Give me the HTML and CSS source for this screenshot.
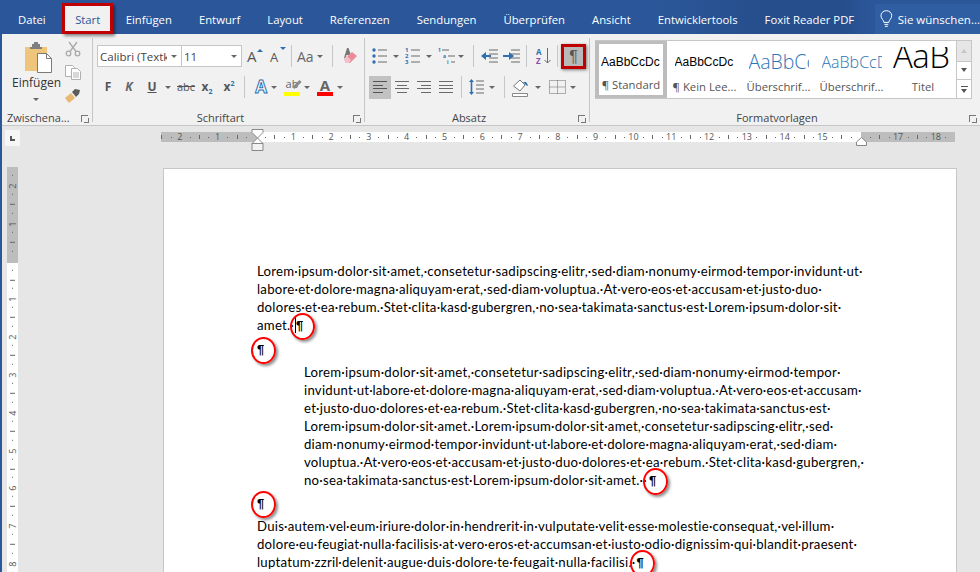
FILE: index.html
```html
<!DOCTYPE html>
<html lang="de">
<head>
<meta charset="utf-8">
<title>Word</title>
<link rel="stylesheet" href="styles.css">
</head>
<body>
<nav class="tabs">
  <span class="tab first">Datei</span>
  <span class="tab active">Start</span>
  <span class="tab">Einfügen</span>
  <span class="tab">Entwurf</span>
  <span class="tab">Layout</span>
  <span class="tab">Referenzen</span>
  <span class="tab">Sendungen</span>
  <span class="tab">Überprüfen</span>
  <span class="tab">Ansicht</span>
  <span class="tab">Entwicklertools</span>
  <span class="tab">Foxit Reader PDF</span>
  <span class="tell">
    <svg width="13" height="18" viewBox="0 0 13 18" fill="none" stroke="#fff"><path d="M4 12.500C4 10 1 9 1 5.500a5.500 5 0 0 1 11 0C12 9 9 10 9 12.500z"/><path d="M4.500 14.500h4M5 16.500h3"/></svg>
    Sie wünschen...
  </span>
</nav>

<section class="ribbon">
  <div class="group g1">
    <div class="gbody clip">
      <div class="paste">
        <svg width="30" height="32" viewBox="0 0 30 32"><path d="M1 5h22v24H1z" fill="#efc57c"/><path d="M8 5V2h2V0h4v2h2v3h2v2H6V5z" fill="#7f7f7f"/><path d="M13.500 11.500h9l5 5v14h-14z" fill="#fff" stroke="#7a7a7a"/><path d="M22.500 11.500v5h5" fill="none" stroke="#7a7a7a"/></svg>
        <span class="paste-t">Einfügen</span>
        <i class="arrow"></i>
      </div>
      <div class="smallcol">
        <svg width="16" height="16" viewBox="0 0 16 16" fill="none" stroke="#a9a9a9" stroke-width="1.300"><circle cx="3.500" cy="12.500" r="2.300"/><circle cx="12.500" cy="12.500" r="2.300"/><path d="M5 10.500 12 1M11 10.500 4 1"/></svg>
        <svg width="16" height="15" viewBox="0 0 16 15" fill="#fff" stroke="#b0b0b0"><path d="M.5.500h7l2 2v9h-9z"/><path d="M6.500 3.500h6l3 3v8h-9z"/><path d="M8 8h6M8 10h6M8 12h6" fill="none"/></svg>
        <svg width="16" height="15" viewBox="0 0 16 15"><path d="M0 10 6 5l4 5-6 5z" fill="#e9b872"/><path d="M7 4l3-3 5 1-1 4-3 3z" fill="#5c5c5c"/></svg>
      </div>
    </div>
    <div class="glabel"><span class="gtext left">Zwischena...</span><i class="launcher"></i></div>
  </div>

  <div class="group g2">
    <div class="gbody">
      <div class="row r1 pl4">
        <span class="combo wfont"><span class="combo-t">Calibri (Textk</span><i class="arrow"></i></span>
        <span class="combo wsize"><span class="combo-t num">11</span><i class="arrow"></i></span>
        <span class="fa ml5">A<i class="up"></i></span>
        <span class="fa small ml7">A<i class="down"></i></span>
        <i class="sep ml7"></i>
        <span class="aa ml5">Aa</span><i class="arrow ml2"></i>
        <i class="sep ml9"></i>
        <svg class="ml7" width="18" height="18" viewBox="0 0 18 18"><path d="M7 1h1.500L12 11H10.500l-1-3h-3l-1 3H4z" fill="#777"/><path d="M4 12 12 5l5 4-7 7H6z" fill="#ec8a9a"/><path d="M4 12l3-3 4 4-2 3H6z" fill="#f4c1c9"/></svg>
      </div>
      <div class="row r2">
        <span class="fb w12 ml9 b">F</span>
        <span class="fb w12 ml9 bi">K</span>
        <span class="fb w12 ml11 b u">U</span><i class="arrow ml7"></i>
        <span class="fb w17 ml6 st">abc</span>
        <span class="fb w14 ml6 b">x<sub>2</sub></span>
        <span class="fb w14 ml8 b">x<sup>2</sup></span>
        <i class="sep ml8"></i>
        <span class="fx ml8">A</span><i class="arrow ml2"></i>
        <span class="hl pen ml7">ab<i class="bar yellow"></i></span><i class="arrow ml4"></i>
        <span class="hl col ml7">A<i class="bar red"></i></span><i class="arrow ml4"></i>
      </div>
    </div>
    <div class="glabel"><span class="gtext">Schriftart</span><i class="launcher"></i></div>
  </div>

  <div class="group g3">
    <div class="gbody">
      <div class="row r1">
        <svg class="ml7" width="15" height="18" viewBox="0 0 15 18"><g fill="#2f6fb0"><circle cx="2" cy="3" r="1.700"/><circle cx="2" cy="9" r="1.700"/><circle cx="2" cy="15" r="1.700"/></g><path d="M6 3h9M6 9h9M6 15h9" stroke="#6a6a6a"/></svg>
        <i class="arrow ml6"></i>
        <svg class="ml6" width="15" height="18" viewBox="0 0 15 18"><g fill="#2f6fb0" font-size="6" font-family="Open Sans, sans-serif" font-weight="700"><text x="0" y="5">1</text><text x="0" y="11">2</text><text x="0" y="17">3</text></g><path d="M6 3h9M6 9h9M6 15h9" stroke="#6a6a6a"/></svg>
        <i class="arrow ml6"></i>
        <svg class="ml6" width="17" height="18" viewBox="0 0 17 18"><g fill="#2f6fb0" font-size="5" font-family="Open Sans, sans-serif" font-weight="700"><text x="0" y="5">1</text><text x="5" y="11">a</text><text x="9" y="17">i</text></g><path d="M4 3h7M10 9h7M13 15h4" stroke="#6a6a6a"/></svg>
        <i class="arrow ml3"></i>
        <i class="sep ml9"></i>
        <svg class="ml7" width="17" height="14" viewBox="0 0 17 14"><path d="M8 1h9M8 5h9M8 9h9M8 13h9" stroke="#6a6a6a"/><path d="M0 7l5-4v3h5v2H5v3z" fill="#2f6fb0"/></svg>
        <svg class="ml5" width="17" height="14" viewBox="0 0 17 14"><path d="M8 1h9M8 5h9M8 9h9M8 13h9" stroke="#6a6a6a"/><path d="M11 7 6 3v3H0v2h6v3z" fill="#2f6fb0"/></svg>
        <i class="sep ml6"></i>
        <svg class="ml9" width="15" height="18" viewBox="0 0 15 18"><text x="0" y="8" font-size="8" font-weight="700" font-family="Open Sans, sans-serif" fill="#2f6fb0">A</text><text x="0" y="17" font-size="8" font-weight="700" font-family="Open Sans, sans-serif" fill="#8e4ba8">Z</text><path d="M11.500 1v15M8.500 13l3 3 3-3" fill="none" stroke="#6a6a6a"/></svg>
        <i class="sep ml6"></i>
        <span class="pil ml3">¶</span>
      </div>
      <div class="row r2">
        <span class="alignbtn ml4"><svg width="14" height="12" viewBox="0 0 14 12"><path d="M0 .5h14M0 4.500h10M0 7.500h14M0 11.500h10" stroke="#555"/></svg></span>
        <svg class="ml4" width="14" height="12" viewBox="0 0 14 12"><path d="M0 .5h14M2 4.500h10M0 7.500h14M2 11.500h10" stroke="#6a6a6a"/></svg>
        <svg class="ml8" width="14" height="12" viewBox="0 0 14 12"><path d="M0 .5h14M4 4.500h10M0 7.500h14M4 11.500h10" stroke="#6a6a6a"/></svg>
        <svg class="ml8" width="14" height="12" viewBox="0 0 14 12"><path d="M0 .5h14M0 4.500h14M0 7.500h14M0 11.500h14" stroke="#6a6a6a"/></svg>
        <i class="sep ml8"></i>
        <svg class="ml7" width="15" height="18" viewBox="0 0 15 18"><path d="M7 3h8M7 7h8M7 11h8M7 15h8" stroke="#6a6a6a"/><path d="M2.500 1l2.500 3H3.300v10H5l-2.500 3L0 14h1.700V4H0z" fill="#2f6fb0"/></svg>
        <i class="arrow ml5"></i>
        <i class="sep ml9"></i>
        <svg class="ml7" width="17" height="19" viewBox="0 0 17 19"><path d="M1.500 8 8 2l5 5-5 6z" fill="#fff" stroke="#777"/><path d="M11 4h3l2 3-1 1z" fill="#2f6fb0"/><path d="M.5 15.500h15v3H.5z" fill="#fff" stroke="#888"/></svg>
        <i class="arrow ml6"></i>
        <svg class="ml8" width="17" height="14" viewBox="0 0 17 14" fill="none" stroke="#666" stroke-dasharray="1 1"><path d="M.5.500h16v13H.5zM8.500.500v13M.5 7h16"/></svg>
        <i class="arrow ml4"></i>
      </div>
    </div>
    <div class="glabel"><span class="gtext">Absatz</span><i class="launcher"></i></div>
  </div>

  <div class="group g4">
    <div class="gbody">
      <div class="gallery">
        <div class="items">
          <div class="style sel"><span class="smp s1">AaBbCcDc</span><span class="lbl">¶ Standard</span></div>
          <div class="style w74"><span class="smp s1">AaBbCcDc</span><span class="lbl">¶ Kein Lee...</span></div>
          <div class="style w73"><span class="smp s2">AaBbCc</span><span class="lbl">Überschrif...</span></div>
          <div class="style w73"><span class="smp s3">AaBbCcD</span><span class="lbl">Überschrif...</span></div>
          <div class="style w70"><span class="smp s4">AaB</span><span class="lbl">Titel</span></div>
        </div>
        <div class="scroll">
          <span class="sb top"><i class="tri upx"></i></span>
          <span class="sb"><i class="tri"></i></span>
          <span class="sb more"><i class="tri"></i></span>
        </div>
      </div>
    </div>
    <div class="glabel"><span class="gtext">Formatvorlagen</span><i class="launcher"></i></div>
  </div>
</section>

<div class="rulerrow">
  <span class="corner"><i></i></span>
  <div class="hruler">
    <span class="cm">2</span><span class="cm">1</span><span class="cm"></span>
    <span class="cm">1</span><span class="cm">2</span><span class="cm">3</span><span class="cm">4</span><span class="cm">5</span>
    <span class="cm">6</span><span class="cm">7</span><span class="cm">8</span><span class="cm">9</span><span class="cm">10</span>
    <span class="cm">11</span><span class="cm">12</span><span class="cm">13</span><span class="cm">14</span><span class="cm">15</span>
    <span class="cm"></span><span class="cm">17</span><span class="cm">18</span>
    <svg class="hourglass" width="13" height="22" viewBox="0 0 13 22"><path d="M1 .5h11v3L6.500 9 1 3.500zM6.500 9 12 14.500H1z" fill="#fff" stroke="#888"/><path d="M1 14.500h11v7H1z" fill="#f2f2f2" stroke="#888"/></svg>
    <svg class="rightmark" width="11" height="9" viewBox="0 0 11 9"><path d="M5.500.5 10.500 5v3.500H.5V5z" fill="#fff" stroke="#888"/></svg>
  </div>
</div>

<main class="work">
  <div class="vruler">
    <span class="vcm">2</span><span class="vcm">1</span><span class="vcm"></span>
    <span class="vcm">1</span><span class="vcm">2</span><span class="vcm">3</span><span class="vcm">4</span>
    <span class="vcm">5</span><span class="vcm">6</span><span class="vcm">7</span><span class="vcm">8</span>
  </div>
  <article class="page">
    <div class="para">
      <div>Lorem·ipsum·dolor·sit·amet,·consetetur·sadipscing·elitr,·sed·diam·nonumy·eirmod·tempor·invidunt·ut·</div>
      <div>labore·et·dolore·magna·aliquyam·erat,·sed·diam·voluptua.·At·vero·eos·et·accusam·et·justo·duo·</div>
      <div>dolores·et·ea·rebum.·Stet·clita·kasd·gubergren,·no·sea·takimata·sanctus·est·Lorem·ipsum·dolor·sit·</div>
      <div>amet.·<span class="mark m1">¶</span></div>
    </div>
    <div class="para gap1"><span class="mark m2">¶</span></div>
    <div class="para indent">
      <div>Lorem·ipsum·dolor·sit·amet,·consetetur·sadipscing·elitr,·sed·diam·nonumy·eirmod·tempor·</div>
      <div>invidunt·ut·labore·et·dolore·magna·aliquyam·erat,·sed·diam·voluptua.·At·vero·eos·et·accusam·</div>
      <div>et·justo·duo·dolores·et·ea·rebum.·Stet·clita·kasd·gubergren,·no·sea·takimata·sanctus·est·</div>
      <div>Lorem·ipsum·dolor·sit·amet.·Lorem·ipsum·dolor·sit·amet,·consetetur·sadipscing·elitr,·sed·</div>
      <div>diam·nonumy·eirmod·tempor·invidunt·ut·labore·et·dolore·magna·aliquyam·erat,·sed·diam·</div>
      <div>voluptua.·At·vero·eos·et·accusam·et·justo·duo·dolores·et·ea·rebum.·Stet·clita·kasd·gubergren,·</div>
      <div>no·sea·takimata·sanctus·est·Lorem·ipsum·dolor·sit·amet.··<span class="mark m4">¶</span></div>
    </div>
    <div class="para"><span class="mark m3">¶</span></div>
    <div class="para">
      <div>Duis·autem·vel·eum·iriure·dolor·in·hendrerit·in·vulputate·velit·esse·molestie·consequat,·vel·illum·</div>
      <div>dolore·eu·feugiat·nulla·facilisis·at·vero·eros·et·accumsan·et·iusto·odio·dignissim·qui·blandit·praesent·</div>
      <div>luptatum·zzril·delenit·augue·duis·dolore·te·feugait·nulla·facilisi.·<span class="mark m5">¶</span></div>
    </div>
  </article>
</main>
</body>
</html>
```
FILE: styles.css
```css
* { box-sizing: border-box; }
html, body { margin: 0; padding: 0; }
body {
  width: 980px; height: 572px; overflow: hidden;
  background: #e6e6e6;
  font-family: "Open Sans", "Noto Sans", sans-serif;
  border-left: 2px solid #2b579a;
}
i { display: block; font-style: normal; }

/* tabs */
.tabs {
  height: 34px; margin-left: -2px;
  background: linear-gradient(90deg, #2b579a 66%, #264e8c 78%, #264e8c 86%, #2b579a 89%);
  display: flex; align-items: stretch; color: #fff;
  font-size: 11.300px; position: relative;
}
.tab { padding: 4px 13.500px 0; display: flex; align-items: center; white-space: nowrap; }
.tab.first { padding-left: 18px; }
.tab.active {
  background: #f1f1f1; color: #2b579a; margin: 3px 0 0 3px; padding: 1px 10px 0;
  border: 3px solid #c00000;
  box-shadow: 2px 2px 3px rgba(0,0,0,.45);
  height: 31px; width: 51px; margin-right: -1px; justify-content: center;
}
.tell {
  margin-left: auto; width: 105px; margin-top: 4px; background: #2f5ea3;
  display: flex; align-items: center; gap: 5px; padding-left: 5px; white-space: nowrap;
  overflow: hidden; font-size: 11.500px;
}

/* ribbon */
.ribbon {
  height: 92px; margin-left: -2px; padding-top: 4px; display: flex;
  background: #f1f1f1; border-bottom: 1px solid #c6c6c6;
  color: #444; font-size: 12px;
}
.group { height: 84px; border-right: 1px solid #c6c6c6; display: flex; flex-direction: column; }
.g1 { width: 93px; }
.g2 { width: 272px; }
.g3 { width: 225px; }
.g4 { width: 390px; border-right: 0; }
.gbody { height: 72px; }
.glabel { height: 12px; line-height: 16px; display: flex; align-items: flex-start; padding-right: 4px; font-size: 11px; color: #444; }
.gtext { flex: 1; text-align: center; }
.gtext.left { text-align: left; padding-left: 7px; }
.launcher {
  width: 7px; height: 7px; margin: 5px 0 0 5px;
  border-left: 1px solid #777; border-top: 1px solid #777;
  position: relative;
}
.launcher::after { content: ""; position: absolute; right: -1px; bottom: -1px; width: 4px; height: 4px; border-right: 1px solid #777; border-bottom: 1px solid #777; }

.clip { display: flex; }
.paste { width: 65px; padding: 4px 0 0 24px; position: relative; }
.paste svg { display: block; }
.paste-t { position: absolute; left: 12px; top: 36px; font-size: 12px; color: #333; }
.paste .arrow { position: absolute; left: 33px; top: 60px; }
.smallcol { display: flex; flex-direction: column; gap: 8px; padding-top: 3px; }

.row { display: flex; align-items: center; height: 22px; }
.r1 { margin-top: 7px; }
.r2 { margin-top: 9px; }
.pl4 { padding-left: 4px; }
.ml2 { margin-left: 2px; } .ml3 { margin-left: 3px; } .ml4 { margin-left: 4px; }
.ml5 { margin-left: 5px; } .ml6 { margin-left: 6px; } .ml7 { margin-left: 7px; }
.ml8 { margin-left: 8px; } .ml9 { margin-left: 9px; } .ml11 { margin-left: 11px; }
.sep { width: 1px; height: 22px; background: #c6c6c6; flex: none; }
.arrow { width: 0; height: 0; border: 3px solid transparent; border-top: 3px solid #666; border-bottom: 0; flex: none; }
.row svg { flex: none; }

.combo {
  height: 22px; background: #fff; border: 1px solid #c6c6c6; display: flex; align-items: center;
  justify-content: space-between; padding: 0 4px 0 2px; font-size: 11.500px; overflow: hidden;
}
.combo + .combo { border-left: 0; }
.wfont { width: 85px; }
.wsize { width: 60px; }
.combo-t { width: 67px; overflow: hidden; white-space: nowrap; color: #444; }
.fa { width: 16px; font-size: 15px; line-height: 18px; position: relative; color: #555; }
.fa.small { font-size: 13px; width: 14px; padding-top: 2px; }
.fa .up, .fa .down { position: absolute; right: 0; top: 2px; width: 0; height: 0; border: 3px solid transparent; border-top: 0; border-bottom: 3px solid #2f6fb0; }
.fa .down { border-bottom: 0; border-top: 3px solid #2f6fb0; top: 1px; right: -2px; }
.aa { font-size: 14px; color: #666; width: 18px; }
.fb { display: block; text-align: center; color: #555; font-size: 12px; line-height: 16px; white-space: nowrap; }
.fb sub, .fb sup { font-size: 7px; line-height: 0; color: #2f6fb0; }
.w12 { width: 12px; } .w14 { width: 14px; } .w17 { width: 17px; }
.b { font-weight: 700; }
.bi { font-weight: 700; font-style: italic; color: #666; }
.u { text-decoration: underline; }
.st { text-decoration: line-through; font-size: 11px; }
.fx { width: 16px; font-size: 17px; font-weight: 700; color: #fff; text-align: center; line-height: 20px; -webkit-text-stroke: 1px #2f6fb0; }
.hl { width: 16px; height: 20px; position: relative; font-size: 11px; color: #666; line-height: 14px; text-align: center; }
.hl.pen::after { content: ""; position: absolute; left: 8px; top: 6px; width: 10px; height: 3px; background: #8a8a8a; transform: rotate(-45deg); }
.hl.col { font-size: 15px; font-weight: 700; line-height: 16px; color: #666; }
.bar { position: absolute; left: 0; right: 0; bottom: 1px; height: 4px; }
.yellow { background: #ffff00; }
.red { background: #ff0000; }

.pil {
  width: 25px; height: 25px; background: #b9b9b9; border: 3px solid #c00000;
  box-shadow: 1px 1px 3px rgba(0,0,0,.5);
  font-family: "Liberation Sans", sans-serif; font-size: 16px; line-height: 19px; text-align: center; color: #555;
  flex: none;
}
.alignbtn { width: 22px; height: 23px; background: #c2c2c2; display: flex; align-items: center; justify-content: center; }

/* gallery */
.gallery { margin: 2px 0 0 5px; width: 377px; height: 59px; display: flex; }
.items { width: 362px; height: 59px; background: #fff; border: 1px solid #c6c6c6; border-left: 0; display: flex; overflow: hidden; }
.style { display: flex; flex-direction: column; align-items: center; height: 100%; overflow: hidden; flex: none; }
.style.sel { width: 72px; border: 4px solid #bdbdbd; margin-top: -1px; height: 59px; }
.w74 { width: 75px; } .w73 { width: 73px; } .w70 { width: 70px; }
.smp { height: 34px; display: block; white-space: nowrap; width: 60px; overflow: hidden; line-height: 42px; }
.sel .smp { height: 30px; line-height: 37px; }
.s1 { font-family: "Liberation Sans", sans-serif; font-size: 12px; color: #000; }
.s2 { font-family: "Open Sans", sans-serif; font-size: 19.500px; color: #2e74b5; font-weight: 300; }
.s3 { font-family: "Open Sans", sans-serif; font-size: 16px; color: #2e74b5; font-weight: 300; }
.s4 { font-family: "Open Sans", sans-serif; font-size: 33px; color: #000; font-weight: 300; height: 28px; margin-top: 6px; line-height: 17px; letter-spacing: -.5px; }
.lbl { font-size: 11.300px; color: #555; white-space: nowrap; line-height: 16px; margin-top: 4px; }
.sel .lbl { margin-top: 3px; }
.scroll { width: 15px; height: 59px; display: flex; flex-direction: column; border: 1px solid #c6c6c6; border-left: 0; background: #fff; }
.sb { flex: 1; border-bottom: 1px solid #c6c6c6; display: flex; align-items: center; justify-content: center; flex-direction: column; }
.sb.top { background: #e6e6e6; flex: 1.100; }
.sb.more { border-bottom: 0; border-top: 0; }
.sb.more::before { content: ""; width: 7px; height: 1px; background: #555; margin-bottom: 2px; }
.tri { width: 0; height: 0; border: 3.500px solid transparent; border-top: 4px solid #555; border-bottom: 0; }
.tri.upx { border-top: 0; border-bottom: 4px solid #c6c6c6; }

/* rulers */
.rulerrow { height: 41px; display: flex; position: relative; margin-left: -2px; }
.corner { width: 15px; height: 16px; margin: 4px 0 0 5px; background: #f6f6f6; flex: none; padding: 6px 0 0 5px; }
.corner i { width: 5px; height: 5px; border-left: 2px solid #555; border-bottom: 2px solid #555; }
.hruler {
  position: absolute; left: 161px; top: 6px; height: 10px; width: 794px; display: flex;
  background: linear-gradient(90deg, #bdbdbd 96px, #fff 96px, #fff 700px, #bdbdbd 700px);
}
.cm {
  width: 37.800px; flex: none; height: 10px; text-align: center; font-size: 9px; line-height: 10px; color: #555;
  background:
    linear-gradient(#666,#666) 0 3px / 1px 4px no-repeat,
    linear-gradient(#666,#666) 9.500px 5px / 1px 1px no-repeat,
    linear-gradient(#666,#666) 28.500px 5px / 1px 1px no-repeat;
}
.hourglass { position: absolute; left: 90px; top: -3px; }
.rightmark { position: absolute; left: 695px; top: 5px; }

.work { display: flex; height: 405px; margin-left: -2px; padding-left: 7px; }
.vruler {
  width: 11px; flex: none; height: 405px; overflow: hidden;
  background: linear-gradient(#bdbdbd 96px, #fff 96px);
}
.vcm {
  display: flex; align-items: center; justify-content: center;
  height: 37.800px; width: 11px; font-size: 9px; color: #555;
  writing-mode: vertical-rl; transform: rotate(180deg);
  background:
    linear-gradient(#666,#666) 3px 0 / 5px 1px no-repeat,
    linear-gradient(#666,#666) 5px 9.500px / 1px 1px no-repeat,
    linear-gradient(#666,#666) 5px 28.500px / 1px 1px no-repeat;
}
.page {
  margin: 1px 0 0 145px; width: 794px; height: 410px; background: #fff;
  border: 1px solid #c6c6c6; padding: 93px 0 0 93px;
  font-family: Lato, "Liberation Sans", sans-serif; font-size: 13.200px; letter-spacing: .24px; line-height: 18px; color: #000;
  white-space: nowrap;
}
.para { margin-bottom: 5px; }
.para.indent { padding-left: 47px; }
.gap1 { margin-top: 6px; }
.mark { position: relative; display: inline-block; font-family: "Liberation Sans", sans-serif; font-size: 13px; font-weight: 700; line-height: 12px; }
.mark::after {
  content: ""; position: absolute; width: 21px; height: 23px; border: 2px solid #f00; border-radius: 50%;
  left: -6px; top: -7px; box-shadow: 2px 2px 3px rgba(0,0,0,.45);
}
.m1 { margin-left: 2px; }
.m4 { margin-left: 2px; }
.m5 { margin-left: 1px; }
.m1::before { content: ""; position: absolute; left: -1px; top: -3px; width: 1px; height: 16px; background: #000; }
```
